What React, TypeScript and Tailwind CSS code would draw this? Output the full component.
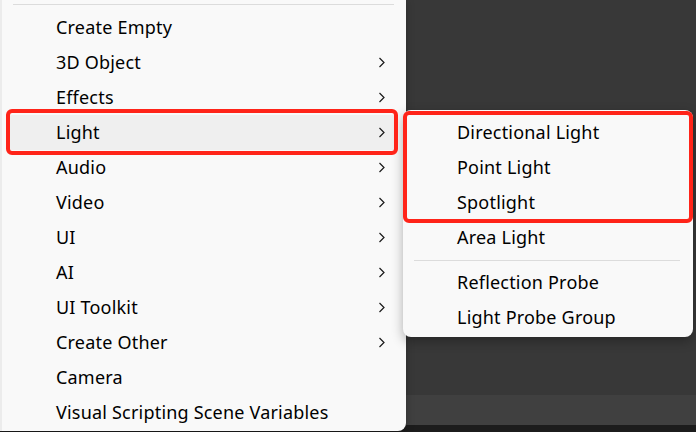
import React from "react";

const Chevron = () => (
  <svg width="8" height="11" viewBox="0 0 8 11" className="shrink-0">
    <polyline points="1.5,1 6,5.5 1.5,10" fill="none" stroke="#1a1a1a" strokeWidth="1.2" />
  </svg>
);

const mainItems: { label: string; sub?: boolean; active?: boolean }[] = [
  { label: "Create Empty" },
  { label: "3D Object", sub: true },
  { label: "Effects", sub: true },
  { label: "Light", sub: true, active: true },
  { label: "Audio", sub: true },
  { label: "Video", sub: true },
  { label: "UI", sub: true },
  { label: "AI", sub: true },
  { label: "UI Toolkit", sub: true },
  { label: "Create Other", sub: true },
  { label: "Camera" },
  { label: "Visual Scripting Scene Variables" },
];

export default function App() {
  const font = { fontFamily: '"Noto Sans", "Segoe UI", sans-serif' };
  return (
    <div className="relative w-[696px] h-[432px] overflow-hidden bg-[#383838] flex flex-col" style={font}>
      <div className="flex-1 bg-[#383838]" />
      <div className="h-[30px] bg-[#404040]" />
      <div className="h-[7px] bg-[#1c1c1c]" />

      {/* main menu */}
      <div className="absolute left-0 top-0 w-[406px] h-[431px] bg-[#f9f9f9] rounded-br-[8px] border-l-2 border-[#ececec] pt-[4px] shadow-[0_2px_8px_rgba(0,0,0,0.25)]">
        <div className="ml-[11px] w-[381px] h-px bg-[#dcdcdc]" />
        <div className="mt-[5px] flex flex-col">
          {mainItems.map((it) => (
            <div
              key={it.label}
              className={`ml-[6px] w-[390px] h-[35px] flex items-center justify-between pl-[48px] pr-[12px] rounded-[4px] text-[18px] tracking-[0.2px] text-black ${it.active ? "bg-[#efefef]" : ""}`}
            >
              <span className="leading-none pb-[2px]">{it.label}</span>
              {it.sub && <Chevron />}
            </div>
          ))}
        </div>
      </div>

      {/* submenu */}
      <div className="absolute left-[403px] top-[110px] w-[290px] h-[227px] bg-[#f9f9f9] rounded-[8px] shadow-[0_4px_12px_rgba(0,0,0,0.3)] pt-[5px] flex flex-col">
        {["Directional Light", "Point Light", "Spotlight", "Area Light"].map((l) => (
          <div key={l} className="h-[35px] flex items-center pl-[54px] text-[18px] tracking-[0.2px] text-black">
            <span className="leading-none pb-[2px]">{l}</span>
          </div>
        ))}
        <div className="h-[10px] flex items-center">
          <div className="ml-[11px] w-[266px] h-px bg-[#dcdcdc]" />
        </div>
        {["Reflection Probe", "Light Probe Group"].map((l) => (
          <div key={l} className="h-[35px] flex items-center pl-[54px] text-[18px] tracking-[0.2px] text-black">
            <span className="leading-none pb-[2px]">{l}</span>
          </div>
        ))}
      </div>

      {/* red annotation boxes */}
      <div className="absolute left-[6px] top-[109px] w-[392px] h-[46px] border-[4px] border-[#ff2419] rounded-[6px]" />
      <div className="absolute left-[403px] top-[111px] w-[290px] h-[112px] border-[4px] border-[#ff2419] rounded-[6px]" />
    </div>
  );
}
